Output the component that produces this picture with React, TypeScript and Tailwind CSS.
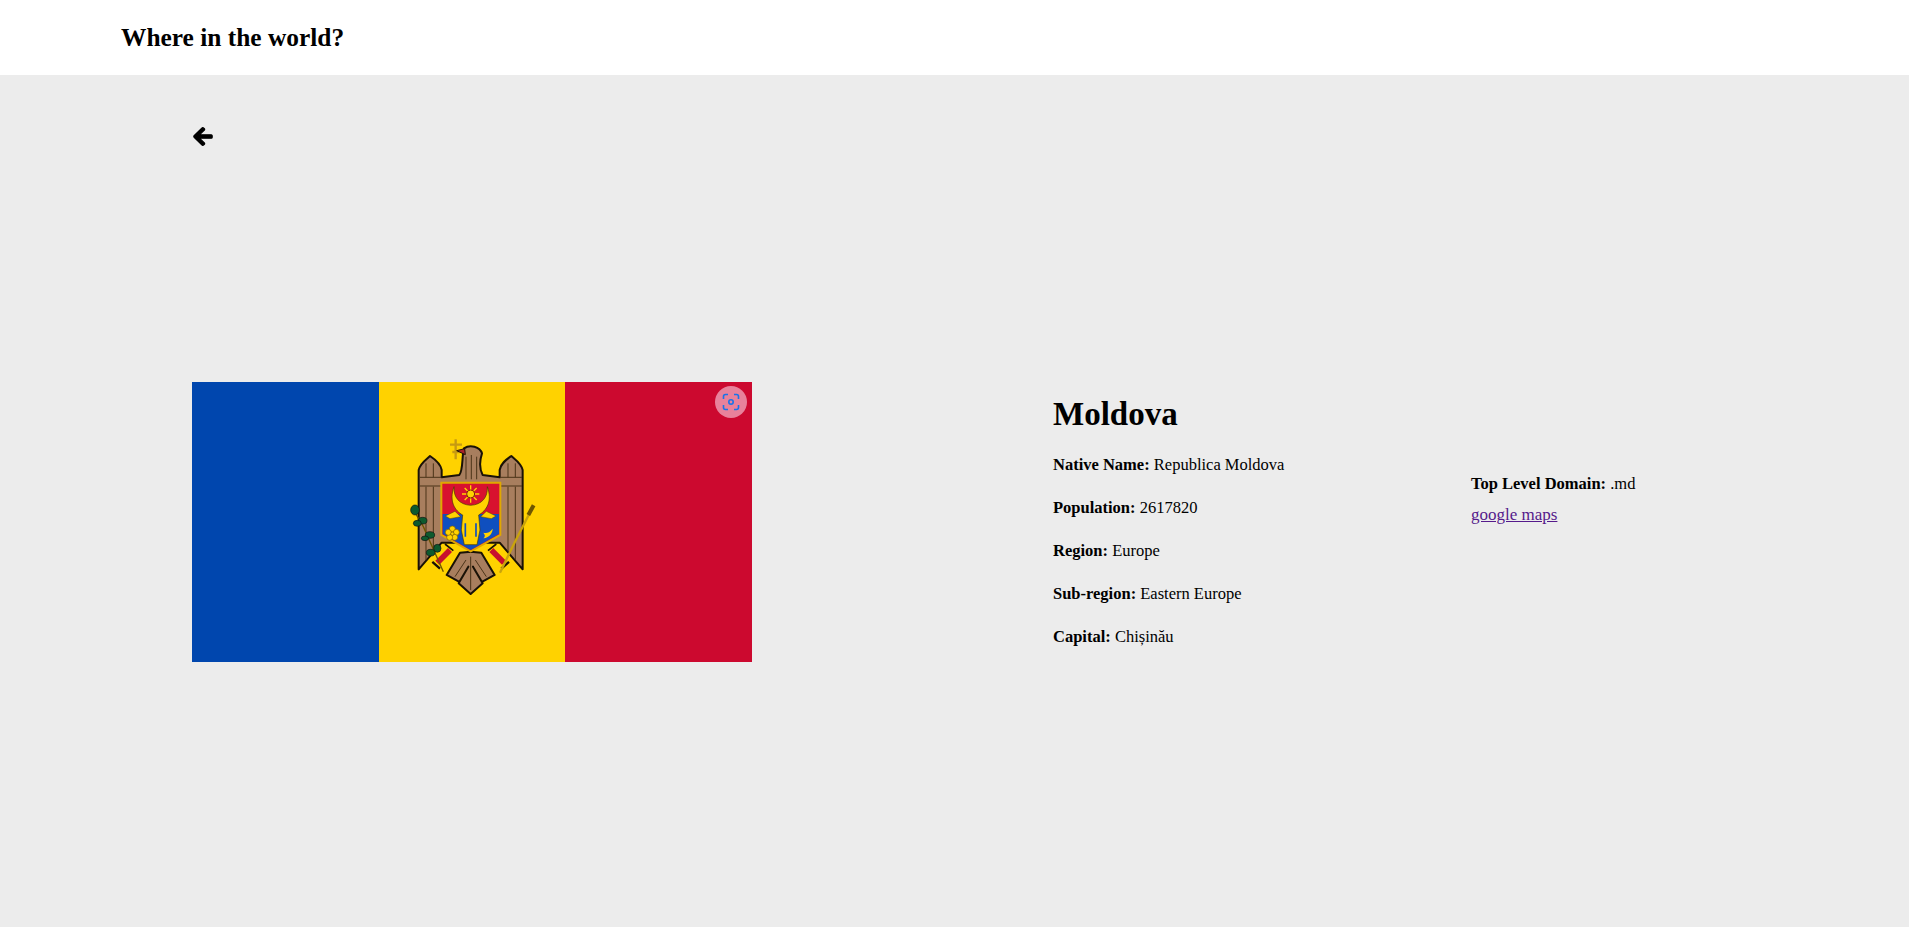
import React from "react";
import { FaArrowLeft } from "react-icons/fa";

function FlagArt() {
  return (
    <svg viewBox="0 0 560 280" className="block h-[280px] w-[560px]">
      <rect x="0" y="0" width="187" height="280" fill="#0046ae" />
      <rect x="187" y="0" width="187" height="280" fill="#ffd200" />
      <rect x="373" y="0" width="187" height="280" fill="#cc092f" />
      {/* coat of arms, coordinates taken from a 3x crop */}
      <g transform="translate(208 38) scale(0.3333)" className="blur-[0.5px]">
        {/* wings, body, tail */}
        <g fill="#a87e5e" stroke="#1a1206" strokeWidth="6" strokeLinejoin="round">
          <path d="M56 448 L56 150 C60 130 80 118 90 108 C105 118 122 130 125 150 L125 172 L178 165 C190 150 185 110 192 85 C210 72 240 80 246 100 C238 125 240 150 248 165 L299 172 L299 150 C302 130 320 118 334 108 C345 118 364 130 368 150 L368 448 L299 368 L125 368 Z" />
          <path d="M212 395 L180 398 L140 465 L178 486 L205 440 L176 490 L212 522 L248 490 L219 440 L246 486 L284 465 L244 398 Z" />
        </g>
        <g stroke="#4a3318" strokeWidth="3" fill="none">
          <path d="M58 172 H124 M58 198 H124 M78 200 V420 M100 200 V395 M78 130 V172 M100 130 V172" />
          <path d="M366 172 H300 M366 198 H300 M346 200 V420 M324 200 V395 M346 130 V172 M324 130 V172" />
          <path d="M198 110 V178 M214 105 V178 M230 110 V178" />
          <path d="M198 420 L165 470 M212 410 V510 M226 420 L259 470" />
        </g>
        {/* cross and beak */}
        <path d="M167 58 V118 M150 74 H186 M157 96 H178" stroke="#c69a12" strokeWidth="7" fill="none" />
        <path d="M170 92 L194 86 L196 104 Z" fill="#a8232a" stroke="#1a1206" strokeWidth="3" />
        {/* shield */}
        <path d="M124 188 H301 V345 L212 394 L124 345 Z" fill="#d8112f" stroke="#e0a800" strokeWidth="6" />
        <path d="M128 282 H297 V342 L212 390 L128 342 Z" fill="#0f4fbf" />
        <path d="M162 200 C146 245 165 272 188 285 L184 330 L193 374 H231 L240 330 L236 285 C259 272 278 245 262 200 C264 232 246 254 212 256 C178 254 160 232 162 200 Z" fill="#ffd200" stroke="#4a3a00" strokeWidth="2" />
        <path d="M136 288 L165 274 L182 290 L150 296 Z M288 288 L259 274 L242 290 L274 296 Z" fill="#ffd200" stroke="#4a3a00" strokeWidth="1.5" />
        <path d="M196 310 V350 M228 310 V350" stroke="#0f4fbf" strokeWidth="5" />
        <path d="M212 196 V248 M186 222 H238 M194 204 L230 240 M230 204 L194 240" stroke="#ffd200" strokeWidth="4" />
        <circle cx="212" cy="222" r="12" fill="#ffd200" stroke="#7a1a10" strokeWidth="3" />
        <g fill="#ffd200" stroke="#7a5a00" strokeWidth="2">
          <circle cx="157" cy="327" r="9" />
          <circle cx="169" cy="337" r="9" />
          <circle cx="164" cy="352" r="9" />
          <circle cx="149" cy="352" r="9" />
          <circle cx="145" cy="337" r="9" />
          <circle cx="157" cy="341" r="5" />
        </g>
        <path d="M250 355 C270 352 278 338 278 326 C268 340 258 340 250 338 C256 345 256 350 250 355 Z" fill="#ffd200" />
        {/* mace and branch */}
        <path d="M112 428 L150 390 M312 428 L274 390" stroke="#c8102e" strokeWidth="17" fill="none" />
        <path d="M97 426 L120 446 M327 426 L304 446" stroke="#1a1206" strokeWidth="7" fill="none" />
        <path d="M135 372 L160 392 M289 372 L264 392" stroke="#1a1206" strokeWidth="5" fill="none" />
        <path d="M400 258 L345 365 L300 458" stroke="#c9a40c" strokeWidth="7" fill="none" />
        <path d="M401 256 L385 285" stroke="#6e5600" strokeWidth="12" fill="none" />
        <path d="M36 262 L70 320 L130 455" stroke="#6e5600" strokeWidth="4" fill="none" />
        <g fill="#0d5a2e" stroke="#111" strokeWidth="2">
          <ellipse cx="45" cy="270" rx="13" ry="15" />
          <ellipse cx="68" cy="302" rx="13" ry="10" />
          <ellipse cx="52" cy="310" rx="12" ry="9" />
          <ellipse cx="90" cy="345" rx="14" ry="10" />
          <ellipse cx="75" cy="355" rx="11" ry="7" />
          <ellipse cx="112" cy="385" rx="11" ry="12" />
          <ellipse cx="92" cy="398" rx="13" ry="10" />
        </g>
      </g>
    </svg>
  );
}

function LensBadge() {
  return (
    <svg viewBox="0 0 32 32" className="absolute right-[5px] top-[4px] h-[32px] w-[32px]">
      <circle cx="16" cy="16" r="16" fill="#e8829b" />
      <path
        d="M8.5 13 V10.5 A2 2 0 0 1 10.5 8.5 H13 M19 8.5 H21.5 A2 2 0 0 1 23.5 10.5 V13 M23.5 19 V21.5 A2 2 0 0 1 21.5 23.5 H19 M13 23.5 H10.5 A2 2 0 0 1 8.5 21.5 V19"
        fill="none"
        stroke="#1a73e8"
        strokeWidth="1.6"
      />
      <circle cx="16" cy="16" r="2.2" fill="none" stroke="#1a73e8" strokeWidth="1.6" />
    </svg>
  );
}

function Info({ label, value }: { label: string; value: string }) {
  return (
    <p className="h-[43px] text-[16.5px] leading-[43px] text-black">
      <b>{label}:</b> {value}
    </p>
  );
}

export default function App() {
  return (
    <div className="min-h-[927px] bg-[#ececec] font-['Liberation_Serif',serif] text-black">
      <header className="flex h-[75px] items-center bg-white pl-[121px]">
        <h1 className="text-[25.4px] font-bold">Where in the world?</h1>
      </header>

      <main className="pl-[192px]">
        <button className="mt-[41px] block h-[40px]">
          <FaArrowLeft className="h-[21px] w-[22px] stroke-[30px] text-black" />
        </button>

        <div className="mt-[226px] flex">
          <div className="relative h-[280px] w-[560px]">
            <FlagArt />
            <LensBadge />
          </div>

          <div className="ml-[301px] w-[418px] pt-[9px]">
            <h2 className="mb-[6px] text-[33px] leading-[46px] font-bold">Moldova</h2>
            <Info label="Native Name" value="Republica Moldova" />
            <Info label="Population" value="2617820" />
            <Info label="Region" value="Europe" />
            <Info label="Sub-region" value="Eastern Europe" />
            <Info label="Capital" value="Chișinău" />
          </div>

          <div className="pt-[86px] text-[16.5px] leading-[31px]">
            <p>
              <b>Top Level Domain:</b> .md
            </p>
            <a href="#" className="text-[17px] text-[#551a8b] underline">
              google maps
            </a>
          </div>
        </div>
      </main>
    </div>
  );
}
